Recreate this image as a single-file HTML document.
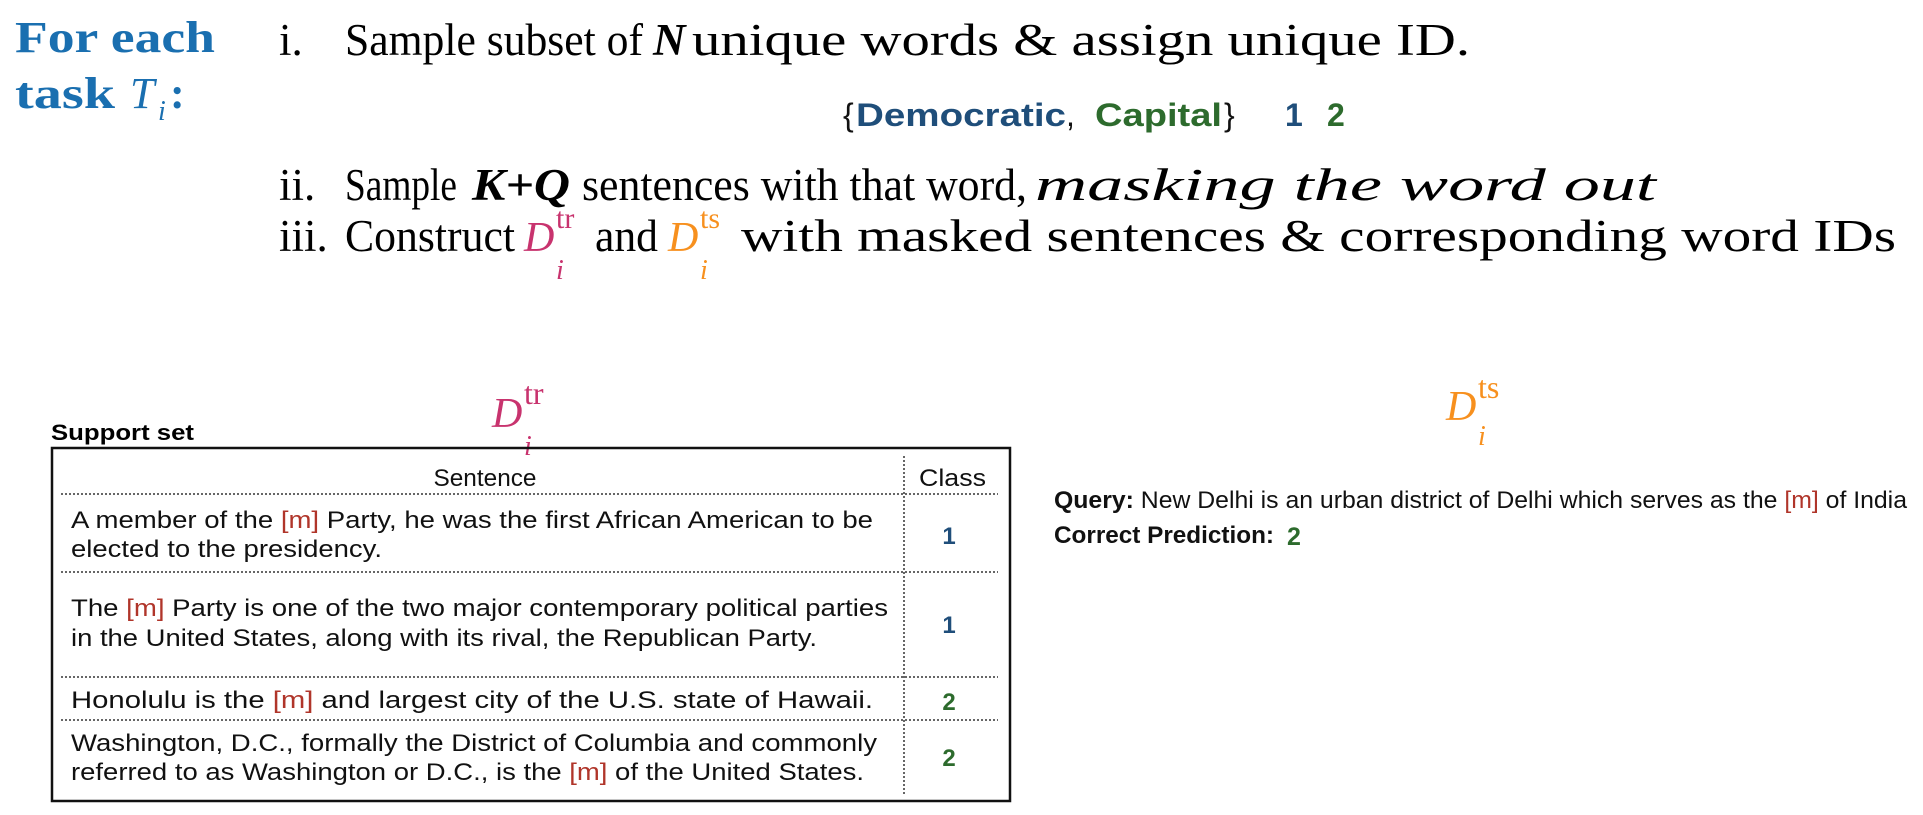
<!DOCTYPE html>
<html><head><meta charset="utf-8"><style>
html,body{margin:0;padding:0;background:#fff;width:1923px;height:815px;overflow:hidden}
svg{display:block}
.s{font-family:"Liberation Serif",serif;font-size:45px;fill:#000}
.h{font-family:"Liberation Sans",sans-serif;font-size:24px;fill:#111}
.m{fill:#b0352a}
</style></head><body>
<svg width="1923" height="815" viewBox="0 0 1923 815" xmlns="http://www.w3.org/2000/svg">
<g font-family="Liberation Serif,serif" font-weight="bold" font-size="44" fill="#1a6fb0">
<text x="15" y="52" textLength="200" lengthAdjust="spacingAndGlyphs">For each</text>
<text x="15" y="108" textLength="100" lengthAdjust="spacingAndGlyphs">task</text>
<text x="130" y="108" font-style="italic" font-weight="normal">T</text>
<text x="158" y="120" font-style="italic" font-weight="normal" font-size="28">i</text>
<text x="170" y="108">:</text>
</g>
<text class="s" x="279" y="55">i.</text>
<text class="s" x="345" y="55" textLength="298" lengthAdjust="spacingAndGlyphs">Sample subset of</text>
<text class="s" x="653" y="55" font-style="italic" font-weight="bold">N</text>
<text class="s" x="692" y="55" textLength="778" lengthAdjust="spacingAndGlyphs">unique words &amp; assign unique ID.</text>
<g font-family="Liberation Sans,sans-serif" font-size="32" font-weight="bold">
<text x="843" y="126" font-weight="normal" fill="#111">{</text>
<text x="856" y="126" fill="#1f4e7a" textLength="210" lengthAdjust="spacingAndGlyphs">Democratic</text>
<text x="1066" y="126" font-weight="normal" fill="#111">,</text>
<text x="1095" y="126" fill="#2d6b2d" textLength="127" lengthAdjust="spacingAndGlyphs">Capital</text>
<text x="1224" y="126" font-weight="normal" fill="#111">}</text>
<text x="1285" y="126" fill="#1f4e7a">1</text>
<text x="1327" y="126" fill="#2d6b2d">2</text>
</g>
<text class="s" x="279" y="200">ii.</text>
<text class="s" x="345" y="200" textLength="112" lengthAdjust="spacingAndGlyphs">Sample</text>
<text class="s" x="472" y="200" font-style="italic" font-weight="bold" textLength="98" lengthAdjust="spacingAndGlyphs">K+Q</text>
<text class="s" x="582" y="200" textLength="445" lengthAdjust="spacingAndGlyphs">sentences with that word,</text>
<text class="s" x="1035" y="200" font-style="italic" textLength="621" lengthAdjust="spacingAndGlyphs">masking the word out</text>
<text class="s" x="279" y="251">iii.</text>
<text class="s" x="345" y="251" textLength="170" lengthAdjust="spacingAndGlyphs">Construct</text>
<g fill="#c8336e" font-family="Liberation Serif,serif">
<text x="524" y="251" font-size="42" font-style="italic">D</text>
<text x="556" y="228" font-size="30">tr</text>
<text x="556" y="279" font-size="28" font-style="italic">i</text>
</g>
<text class="s" x="595" y="251" textLength="63" lengthAdjust="spacingAndGlyphs">and</text>
<g fill="#f7901e" font-family="Liberation Serif,serif">
<text x="668" y="251" font-size="42" font-style="italic">D</text>
<text x="700" y="228" font-size="30">ts</text>
<text x="700" y="279" font-size="28" font-style="italic">i</text>
</g>
<text class="s" x="741" y="251" textLength="1155" lengthAdjust="spacingAndGlyphs">with masked sentences &amp; corresponding word IDs</text>
<g fill="#c8336e" font-family="Liberation Serif,serif">
<text x="492" y="427" font-size="42" font-style="italic">D</text>
<text x="524" y="404" font-size="32">tr</text>
<text x="524" y="455" font-size="28" font-style="italic">i</text>
</g>
<g fill="#f7901e" font-family="Liberation Serif,serif">
<text x="1446" y="420" font-size="42" font-style="italic">D</text>
<text x="1478" y="398" font-size="32">ts</text>
<text x="1478" y="445" font-size="28" font-style="italic">i</text>
</g>
<text x="51" y="440" font-family="Liberation Sans,sans-serif" font-weight="bold" font-size="22" textLength="143" lengthAdjust="spacingAndGlyphs">Support set</text>
<rect x="52" y="448" width="958" height="353" fill="none" stroke="#111" stroke-width="2.5"/>
<g stroke="#333" stroke-width="1.5" stroke-dasharray="2,2">
<line x1="904" y1="456" x2="904" y2="796"/>
<line x1="61" y1="494" x2="998" y2="494"/>
<line x1="61" y1="572" x2="998" y2="572"/>
<line x1="61" y1="677" x2="998" y2="677"/>
<line x1="61" y1="720" x2="998" y2="720"/>
</g>
<text class="h" x="485" y="486" text-anchor="middle" textLength="103" lengthAdjust="spacingAndGlyphs">Sentence</text>
<text class="h" x="919" y="486" textLength="67" lengthAdjust="spacingAndGlyphs">Class</text>
<text class="h" x="71" y="528" textLength="802" lengthAdjust="spacingAndGlyphs">A member of the <tspan class="m">[m]</tspan> Party, he was the first African American to be</text>
<text class="h" x="71" y="557" textLength="311" lengthAdjust="spacingAndGlyphs">elected to the presidency.</text>
<text class="h" x="71" y="616" textLength="817" lengthAdjust="spacingAndGlyphs">The <tspan class="m">[m]</tspan> Party is one of the two major contemporary political parties</text>
<text class="h" x="71" y="646" textLength="746" lengthAdjust="spacingAndGlyphs">in the United States, along with its rival, the Republican Party.</text>
<text class="h" x="71" y="708" textLength="802" lengthAdjust="spacingAndGlyphs">Honolulu is the <tspan class="m">[m]</tspan> and largest city of the U.S. state of Hawaii.</text>
<text class="h" x="71" y="751" textLength="806" lengthAdjust="spacingAndGlyphs">Washington, D.C., formally the District of Columbia and commonly</text>
<text class="h" x="71" y="780" textLength="793" lengthAdjust="spacingAndGlyphs">referred to as Washington or D.C., is the <tspan class="m">[m]</tspan> of the United States.</text>
<g font-family="Liberation Sans,sans-serif" font-weight="bold" font-size="24" text-anchor="middle">
<text x="949" y="544" fill="#1f4e7a">1</text>
<text x="949" y="633" fill="#1f4e7a">1</text>
<text x="949" y="710" fill="#2d6b2d">2</text>
<text x="949" y="766" fill="#2d6b2d">2</text>
</g>
<text class="h" x="1054" y="508" font-size="22" textLength="853" lengthAdjust="spacingAndGlyphs"><tspan font-weight="bold">Query:</tspan>  New Delhi is an urban district of Delhi which serves as the <tspan class="m">[m]</tspan> of India</text>
<text class="h" x="1054" y="543" font-size="22" font-weight="bold" textLength="220" lengthAdjust="spacingAndGlyphs">Correct Prediction:</text>
<text x="1287" y="545" font-family="Liberation Sans,sans-serif" font-weight="bold" font-size="25" fill="#2d6b2d">2</text>
</svg>
</body></html>
